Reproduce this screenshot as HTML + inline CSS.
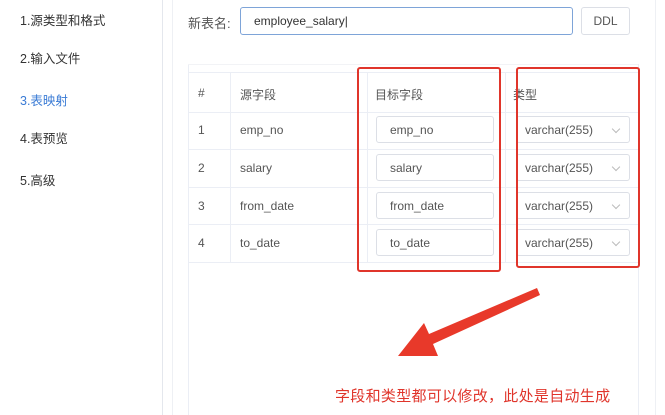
<!DOCTYPE html>
<html><head><meta charset="utf-8"><style>
html,body{margin:0;width:665px;height:415px;overflow:hidden}
body{background:#fff;font-family:"Liberation Sans","Noto Sans CJK SC",sans-serif;position:relative;color:#555;font-size:12px}
.a{position:absolute}
.nav{left:20px;font-size:12.5px;color:#333}
.cell{position:absolute;font-size:12px;color:#555}
.inp{position:absolute;border:1px solid #dcdfe6;border-radius:3px;background:#fff;height:27px;line-height:27px;box-sizing:border-box;font-size:12px;color:#555}
.hl{position:absolute;left:188px;width:450px;height:1px;background:#ebeef5}
.chev{position:absolute;right:10px;top:9px;width:5px;height:5px;border-right:1px solid #bbb;border-bottom:1px solid #bbb;transform:rotate(45deg)}
</style></head><body>
<div class="a" style="left:162px;top:0;width:1px;height:415px;background:#e4e7ed"></div>
<div class="a" style="left:172px;top:0;width:1px;height:415px;background:#eef0f4"></div>
<div class="a" style="left:655px;top:0;width:1px;height:415px;background:#eef0f4"></div>
<div class="a nav" style="top:10px">1.源类型和格式</div>
<div class="a nav" style="top:48px">2.输入文件</div>
<div class="a nav" style="top:90px;color:#3a7bd5">3.表映射</div>
<div class="a nav" style="top:128px">4.表预览</div>
<div class="a nav" style="top:170px">5.高级</div>

<div class="a" style="left:188px;top:13px;font-size:13px;color:#555">新表名:</div>
<div class="inp" style="left:240px;top:7px;width:333px;height:28px;line-height:26px;border-color:#7ea4d8;padding-left:13px;color:#333">employee_salary|</div>
<div class="inp" style="left:581px;top:7px;width:49px;height:28px;line-height:26px;text-align:center;color:#555">DDL</div>

<div class="a" style="left:188px;top:64px;width:451px;height:360px;border:1px solid #ebeef5;border-top:none;box-sizing:border-box"></div>
<div class="hl" style="top:64px;background:#f2f3f6"></div>
<div class="hl" style="top:72px"></div>
<div class="hl" style="top:112px"></div>
<div class="hl" style="top:149px"></div>
<div class="hl" style="top:187px"></div>
<div class="hl" style="top:224px"></div>
<div class="hl" style="top:262px"></div>
<div class="a" style="left:230px;top:72px;width:1px;height:190px;background:#ebeef5"></div>
<div class="a" style="left:367px;top:72px;width:1px;height:190px;background:#ebeef5"></div>
<div class="a" style="left:505px;top:72px;width:1px;height:190px;background:#ebeef5"></div>

<div class="cell" style="left:198px;top:86px">#</div>
<div class="cell" style="left:240px;top:86px">源字段</div>
<div class="cell" style="left:375px;top:86px">目标字段</div>
<div class="cell" style="left:513px;top:86px">类型</div>

<div class="cell" style="left:198px;top:123px">1</div><div class="cell" style="left:240px;top:123px">emp_no</div>
<div class="inp" style="left:376px;top:116px;width:118px;padding-left:13px">emp_no</div>
<div class="inp" style="left:516px;top:116px;width:114px;padding-left:8px">varchar(255)<span class="chev"></span></div>

<div class="cell" style="left:198px;top:161px">2</div><div class="cell" style="left:240px;top:161px">salary</div>
<div class="inp" style="left:376px;top:154px;width:118px;padding-left:13px">salary</div>
<div class="inp" style="left:516px;top:154px;width:114px;padding-left:8px">varchar(255)<span class="chev"></span></div>

<div class="cell" style="left:198px;top:199px">3</div><div class="cell" style="left:240px;top:199px">from_date</div>
<div class="inp" style="left:376px;top:192px;width:118px;padding-left:13px">from_date</div>
<div class="inp" style="left:516px;top:192px;width:114px;padding-left:8px">varchar(255)<span class="chev"></span></div>

<div class="cell" style="left:198px;top:236px">4</div><div class="cell" style="left:240px;top:236px">to_date</div>
<div class="inp" style="left:376px;top:229px;width:118px;padding-left:13px">to_date</div>
<div class="inp" style="left:516px;top:229px;width:114px;padding-left:8px">varchar(255)<span class="chev"></span></div>

<div class="a" style="left:357px;top:67px;width:144px;height:205px;border:2px solid #e0352b;border-radius:3px;box-sizing:border-box"></div>
<div class="a" style="left:516px;top:67px;width:124px;height:201px;border:2px solid #e0352b;border-radius:3px;box-sizing:border-box"></div>

<svg class="a" style="left:0;top:0" width="665" height="415">
<path d="M537 288 L540 295 L433 344 L438 356 L398 356 L424 323 L429 334 Z" fill="#e8392a"/>
</svg>
<div class="a" style="left:335px;top:385px;font-size:15px;color:#e0352b;letter-spacing:0.3px">字段和类型都可以修改，此处是自动生成</div>
</body></html>
